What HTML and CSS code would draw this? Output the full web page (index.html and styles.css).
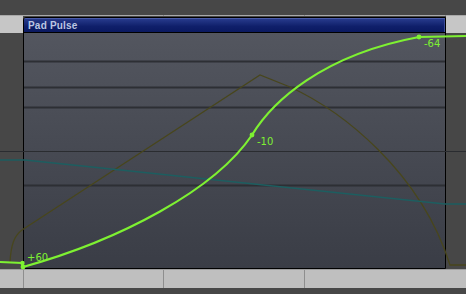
FILE: index.html
```html
<!DOCTYPE html>
<html lang="en">
<head>
	<meta charset="UTF-8">
	<title>Pad Pulse</title>
	<link rel="stylesheet" href="styles.css">
</head>
<body>
	<div class="stage">
		<div class="top"></div>
		<div class="ruler">
			<span class="tick"></span>
			<span class="tick"></span>
			<span class="tick"></span>
		</div>
		<div class="lane">
			<div class="side"><div class="side-head"></div></div>
			<div class="win">
				<div class="win-title">Pad Pulse</div>
				<div class="win-body"></div>
			</div>
			<div class="side"><div class="side-head"></div></div>
		</div>
		<div class="bar">
			<span class="cell"></span>
			<span class="cell"></span>
			<span class="cell"></span>
			<span class="cell"></span>
		</div>

		<svg class="graph" width="466" height="294" viewBox="0 0 466 294">
			<!-- grid lines -->
			<g class="rows">
				<line x1="24" y1="61.5" x2="445" y2="61.5"/>
				<line x1="24" y1="87.5" x2="445" y2="87.5"/>
				<line x1="24" y1="107.5" x2="445" y2="107.5"/>
				<line x1="24" y1="185.5" x2="445" y2="185.5"/>
			</g>
			<line class="zero" x1="0" y1="151.5" x2="466" y2="151.5"/>

			<!-- other tracks -->
			<path class="olive" d="M10 262 C11 245, 14 236, 22 230 L260 75 L290 87 C340 110, 420 170, 450 265 L466 265"/>
			<path class="teal" d="M0 160 L25 160 L445 204 L466 204"/>

			<!-- active track -->
			<path class="green" d="M0 262 L22 263 L23 267 C120 240, 215 190, 252 135 C272 102, 322 55, 419 37 L466 36"/>
			<g class="dots">
				<circle cx="22.5" cy="263" r="2.2"/>
				<circle cx="23" cy="267" r="2.4"/>
				<circle cx="252" cy="135" r="2.4"/>
				<circle cx="419" cy="37" r="2.4"/>
			</g>
			<text class="lbl" x="27" y="261">+60</text>
			<text class="lbl" x="257" y="145">-10</text>
			<text class="lbl" x="424" y="47">-64</text>
		</svg>
	</div>
</body>
</html>
```

FILE: styles.css
```css
*{margin: 0px; padding: 0px; box-sizing: border-box;}
body{
	background-color: #474747;
	font-family: "Liberation Sans", Arial, sans-serif;
}
.stage{
	position: relative;
	width: 466px;
	height: 294px;
	overflow: hidden;
}
.top{
	height: 15px;
}
.ruler{
	height: 1px;
	background-color: #a9a9a9;
	display: grid;
	grid-template-columns: 164px 141px 141px 20px;
}
.ruler .tick{
	border-right: 1px solid #8c8c8c;
}
.lane{
	display: grid;
	grid-template-columns: 23px 423px 20px;
	height: 253px;
}
.side-head{
	height: 17px;
	background-color: #c6c6c6;
}
.win{
	margin-top: 1px;
	border: 1px solid #000;
	border-top-left-radius: 3px;
	display: flex;
	flex-direction: column;
	overflow: hidden;
}
.win-title{
	height: 15px;
	padding-left: 4px;
	background: linear-gradient(#2a3e90, #0f1f6a 60%, #0a1960);
	border-bottom: 1px solid #000;
	box-shadow: inset 0 1px 0 #4a5aa8, inset -1px 0 0 #3c4c98;
	color: #bcc6e2;
	font-size: 10px;
	font-weight: bold;
	letter-spacing: 0.2px;
	line-height: 15px;
}
.win-body{
	flex: 1;
	background: linear-gradient(#53565f, #3a3d46);
}
.bar{
	height: 19px;
	background-color: #bfbfbf;
	border-top: 1px solid #9d9d9d;
	display: grid;
	grid-template-columns: 24px 140px 141px 141px 20px;
}
.bar .cell{
	border-right: 1px solid #8e8e8e;
}
.bar .cell:last-child{
	border-right: none;
}
.graph{
	position: absolute;
	left: 0;
	top: 0;
	pointer-events: none;
}
.rows line{
	stroke: #2d2f34;
	stroke-width: 2;
}
.zero{
	stroke: #2a2c30;
	stroke-width: 1;
}
.olive{
	fill: none;
	stroke: #48461c;
	stroke-width: 1.3;
}
.teal{
	fill: none;
	stroke: #1d5e60;
	stroke-width: 1.3;
}
.green{
	fill: none;
	stroke: #7ef132;
	stroke-width: 2.2;
}
.dots circle{
	fill: #7ef132;
}
.lbl{
	fill: #7ef132;
	font-family: "DejaVu Sans", sans-serif;
	font-size: 10px;
}
```
